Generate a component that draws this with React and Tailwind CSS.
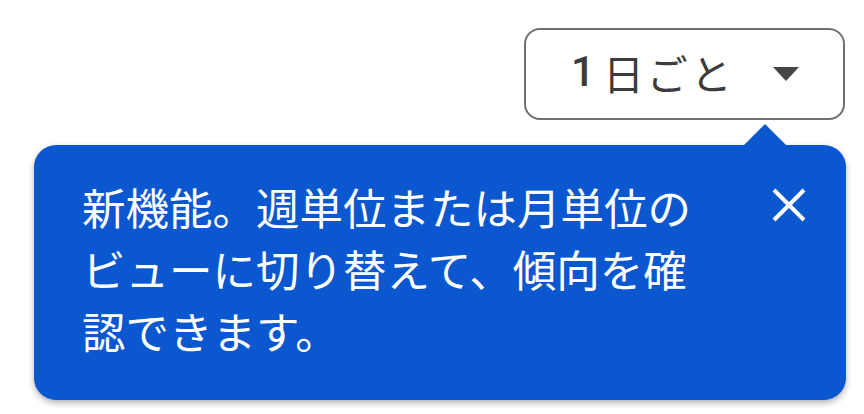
export default function App() {
  return (
    <div
      className="w-[864px] h-[414px] bg-white overflow-hidden relative"
      style={{ fontFamily: '"Noto Sans CJK JP", "Noto Sans", sans-serif' }}
    >
      <div className="flex justify-end pt-[28px] pr-[19px]">
        <button className="w-[321px] h-[92px] rounded-[16px] border-2 border-[#707070] bg-white flex items-center pl-[45px] pr-[44px] text-[#3c3c3c]">
          <span className="text-[41px] leading-none tracking-[3px] flex items-center -mt-[4px]">
            <span className="font-['Roboto'] font-medium text-[42px] mr-[5px]">1</span>
            日ごと
          </span>
          <svg className="ml-auto" width="26" height="14" viewBox="0 0 26 14">
            <path d="M0 0 L26 0 L13 14 Z" fill="#444" />
          </svg>
        </button>
      </div>

      <div className="relative mt-[25px] ml-[34px] w-[812px] h-[255px] rounded-[22px] bg-[#0b57d0] shadow-[0_3px_6px_rgba(0,0,0,0.3)] flex">
        <svg className="absolute -top-[21px] left-[709px]" width="44" height="22" viewBox="0 0 44 22">
          <path d="M0 22 L22 0 L44 22 Z" fill="#0b57d0" />
        </svg>
        <p className="w-[640px] ml-[48px] mt-[31px] text-white text-[43.5px] leading-[62px]">
          新機能。週単位または月単位のビューに切り替えて、傾向を確認できます。
        </p>
        <button className="ml-auto mr-[40px] mt-[43px] w-[34px] h-[34px] self-start">
          <svg width="34" height="34" viewBox="0 0 34 34">
            <path d="M2 2 L32 32 M32 2 L2 32" stroke="white" strokeWidth="4" />
          </svg>
        </button>
      </div>
    </div>
  );
}
